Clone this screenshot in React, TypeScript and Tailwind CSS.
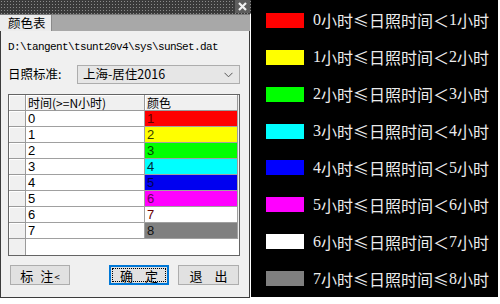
import React from 'react';

const cjk = "font-['Noto_Sans_CJK_SC','Noto_Sans',sans-serif]";

const rows = [
  { t: '0', n: '1', bg: 'bg-[#ff0000]', tc: 'text-[#5c0000]' },
  { t: '1', n: '2', bg: 'bg-[#ffff00]', tc: 'text-[#3c3c00]' },
  { t: '2', n: '3', bg: 'bg-[#00ff00]', tc: 'text-[#004400]' },
  { t: '3', n: '4', bg: 'bg-[#00ffff]', tc: 'text-[#002a3a]' },
  { t: '4', n: '5', bg: 'bg-[#0000f0]', tc: 'text-[#000050]' },
  { t: '5', n: '6', bg: 'bg-[#ff00ff]', tc: 'text-[#6a0060]' },
  { t: '6', n: '7', bg: 'bg-[#ffffff]', tc: 'text-[#6a0000]' },
  { t: '7', n: '8', bg: 'bg-[#808080]', tc: 'text-[#111111]' },
];

const legend = [
  { a: '0', b: '1', sw: 'bg-[#ff0000]', last: false },
  { a: '1', b: '2', sw: 'bg-[#ffff00]', last: false },
  { a: '2', b: '3', sw: 'bg-[#00ff00]', last: false },
  { a: '3', b: '4', sw: 'bg-[#00ffff]', last: false },
  { a: '4', b: '5', sw: 'bg-[#0000ff]', last: false },
  { a: '5', b: '6', sw: 'bg-[#ff00ff]', last: false },
  { a: '6', b: '7', sw: 'bg-[#ffffff]', last: false },
  { a: '7', b: '8', sw: 'bg-[#7f7f7f]', last: true },
];

const RowHead: React.FC = () => (
  <div className="w-[17px] h-full bg-[#f0f0f0] border-r border-b border-[#9a9a9a] shadow-[inset_1px_1px_0_#ffffff]" />
);

const Legend: React.FC = () => (
  <div className="w-[247px] h-[297px] bg-black pt-[2px] flex flex-col">
    {legend.map((r) => (
      <div key={r.a} className="h-[37px] flex items-center pl-[15px]">
        <div className={`w-[38px] h-[15px] ${r.sw}`} />
        <div className="ml-[9px] flex items-center text-[16px] leading-none text-[#ececec] font-['Liberation_Serif','Noto_Sans_CJK_SC',serif]">
          <span className="w-[8px]">{r.a}</span>
          <span className={cjk}>小时</span>
          <span className={`w-[16px] text-center ${cjk}`}>≤</span>
          <span className={cjk}>日照时间</span>
          <span className={`w-[16px] text-center ${cjk}`}>{r.last ? '≤' : '＜'}</span>
          <span className="w-[8px]">{r.b}</span>
          <span className={cjk}>小时</span>
        </div>
      </div>
    ))}
  </div>
);

export default function App() {
  return (
    <div className="w-[500px] h-[304px] bg-white flex items-start">
      <div className="w-[251px] flex flex-col">
        {/* title bar */}
        <div className="h-[14px] flex bg-[#3a3a3a] bg-[image:radial-gradient(#8c8c8c_0.7px,transparent_0.9px)] bg-[length:3px_3px]">
          <div className="flex-1" />
          <div className="w-[15px] h-[13px] bg-[#5e5e5e] flex items-center justify-center">
            <svg width="9" height="9" viewBox="0 0 9 9">
              <path d="M1 1 L8 8 M8 1 L1 8" stroke="#f2f2f2" strokeWidth="2.2" />
            </svg>
          </div>
          <div className="w-[1px]" />
        </div>
        {/* tab bar */}
        <div className="h-[17px] bg-[#a8a8a8] border-t border-[#7a7a7a] flex mr-[1px]">
          <div className={`w-[52px] h-full bg-[#ececec] border-r border-[#8a8a8a] flex items-center pl-[8px] text-[12.5px] leading-none text-black ${cjk}`}>
            颜色表
          </div>
        </div>
        {/* body */}
        <div className="w-[250px] h-[267px] bg-[#f0f0f0] border-l border-r border-b border-[#3c3c3c] flex flex-col pl-[7px]">
          <div className="mt-[9px] h-[14px] flex items-center text-[11px] tracking-[-0.6px] text-black font-['Liberation_Mono',monospace]">
            D:\tangent\tsunt20v4\sys\sunSet.dat
          </div>
          <div className="mt-[11px] h-[19px] flex items-center">
            <span className={`w-[69px] text-[12.5px] text-black ${cjk}`}>日照标准:</span>
            <div className="w-[163px] h-[19px] bg-[#e6e6e6] border border-[#adadad] flex items-center pl-[5px] pr-[6px]">
              <span className={`flex-1 text-[12.5px] leading-none text-black ${cjk}`}>上海-居住2016</span>
              <svg width="9" height="6" viewBox="0 0 9 6">
                <path d="M0.5 0.8 L4.5 4.8 L8.5 0.8" fill="none" stroke="#555" strokeWidth="1" />
              </svg>
            </div>
          </div>
          {/* grid */}
          <div className="mt-[10px] w-[232px] h-[162px] border border-[#646464] bg-[#f0f0f0] flex flex-col">
            <div className="h-[16px] flex">
              <RowHead />
              <div className={`w-[119px] bg-[#f0f0f0] border-r border-b border-[#9a9a9a] shadow-[inset_1px_1px_0_#ffffff] pl-[2px] flex items-end text-[12px] leading-[15px] text-black ${cjk}`}>
                时间(&gt;=N小时)
              </div>
              <div className={`w-[93px] bg-[#f0f0f0] border-r border-b border-[#9a9a9a] shadow-[inset_1px_1px_0_#ffffff] pl-[2px] flex items-end text-[12px] leading-[15px] text-black ${cjk}`}>
                颜色
              </div>
            </div>
            {rows.map((r) => (
              <div key={r.t} className="h-[16px] flex">
                <RowHead />
                <div className="w-[119px] bg-white border-r border-b border-[#a0a0a0] pl-[2px] flex items-center text-[13px] leading-none text-black font-['Liberation_Sans',sans-serif]">
                  {r.t}
                </div>
                <div className={`w-[93px] ${r.bg} border-r border-b border-[#a0a0a0] pl-[2px] flex items-center text-[13px] leading-none font-['Liberation_Sans',sans-serif] ${r.tc}`}>
                  {r.n}
                </div>
              </div>
            ))}
            <div className="flex-1 flex">
              <div className="w-[17px] h-full bg-[#f0f0f0] border-r border-[#9a9a9a]" />
              <div className="w-[213px] h-full bg-white" />
            </div>
          </div>
          {/* buttons */}
          <div className={`mt-[9px] h-[20px] flex text-[13px] leading-none text-black ${cjk}`}>
            <div className="ml-[2px] w-[60px] h-[20px] bg-[#e1e1e1] border border-[#adadad] flex items-center justify-center gap-[7px]">
              <span>标</span>
              <span>注<span className="text-[10px] ml-[1px]">&lt;</span></span>
            </div>
            <div className="ml-[39px] w-[60px] h-[20px] bg-[#e1e1e1] border-2 border-[#0078d7] p-[1px]">
              <div className="w-full h-full border border-dotted border-black flex items-center justify-center gap-[12px]">
                <span>确</span>
                <span>定</span>
              </div>
            </div>
            <div className="ml-[9px] w-[61px] h-[20px] bg-[#e1e1e1] border border-[#adadad] flex items-center justify-center gap-[12px]">
              <span>退</span>
              <span>出</span>
            </div>
          </div>
        </div>
      </div>
      <Legend />
    </div>
  );
}
